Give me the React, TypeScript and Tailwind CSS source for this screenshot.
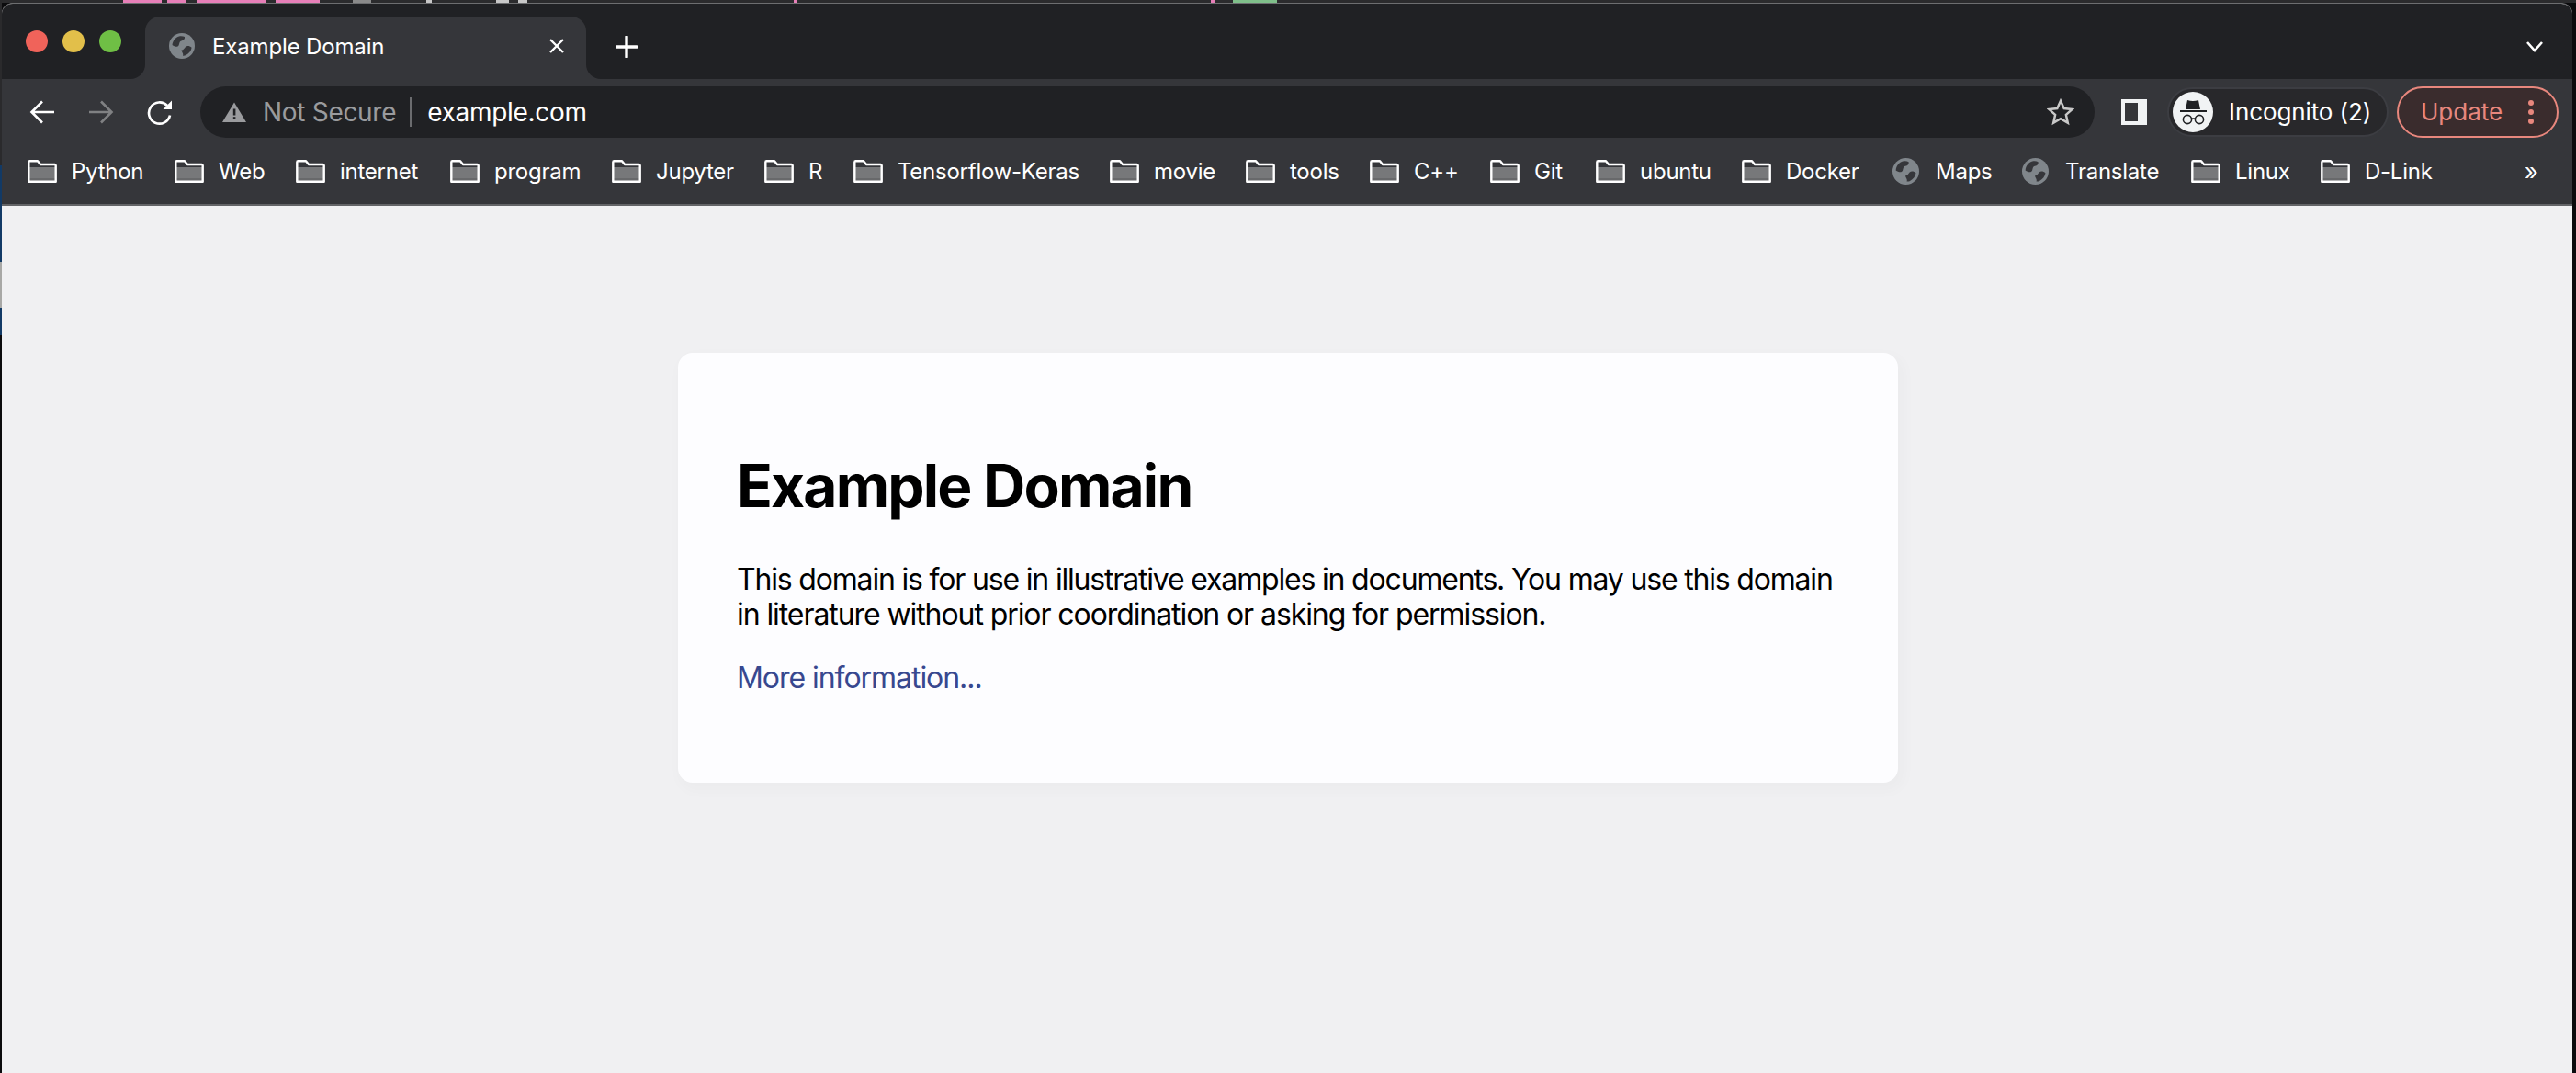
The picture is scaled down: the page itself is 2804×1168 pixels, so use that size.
import React from "react";

function Globe({ className }: { className: string }) {
  return (
    <svg viewBox="0 0 28 28" className={className}>
      <circle cx="14" cy="14" r="14" fill="#80868b" />
      <path d="M3.5 13 C4 8 7 4.5 11 3.4 C13.5 3 15.5 3.4 17 4 C17.5 6 16 8 13.5 8.5 C11 9 11.5 11.5 10.5 13.5 C9.5 15.5 6 15 3.5 13 Z" fill="#35363a" />
      <path d="M13.5 18.5 C15.5 19 16.5 16.5 18 15 C20 13.5 22.5 14 24.6 15.8 C24.2 19 22 22.5 18 24.3 C16.5 24.8 15.5 24.8 15 24.5 C16 22.5 14 21 13.5 18.5 Z" fill="#35363a" />
    </svg>
  );
}

function Folder() {
  return (
    <svg viewBox="0 0 32 25" className="w-[32px] h-[25px] shrink-0">
      <rect x="2" y="8" width="28" height="12" fill="#77787a" />
      <rect x="2" y="20" width="28" height="3" fill="#68696b" />
      <path d="M1.3 23.7 V2.5 Q1.3 1.3 2.5 1.3 H11 L14 5 H29.5 Q30.7 5 30.7 6.2 V23.7 Z" fill="none" stroke="#ffffff" strokeWidth="2.4" strokeLinejoin="round" />
    </svg>
  );
}

type Mark = { label: string; width: string; globe?: boolean };

const marks: Mark[] = [
  { label: "Python", width: "w-[160px]" },
  { label: "Web", width: "w-[132px]" },
  { label: "internet", width: "w-[168px]" },
  { label: "program", width: "w-[176px]" },
  { label: "Jupyter", width: "w-[166px]" },
  { label: "R", width: "w-[97px]" },
  { label: "Tensorflow-Keras", width: "w-[279px]" },
  { label: "movie", width: "w-[148px]" },
  { label: "tools", width: "w-[135px]" },
  { label: "C++", width: "w-[131px]" },
  { label: "Git", width: "w-[115px]" },
  { label: "ubuntu", width: "w-[159px]" },
  { label: "Docker", width: "w-[164px]" },
  { label: "Maps", width: "w-[141px]", globe: true },
  { label: "Translate", width: "w-[184px]", globe: true },
  { label: "Linux", width: "w-[141px]" },
  { label: "D-Link", width: "w-[150px]" },
];

export default function App() {
  return (
    <div className="w-[2804px] h-[1168px] overflow-hidden flex bg-[#0b0b0d] font-['Inter',sans-serif]">
      <div className="w-[2px] shrink-0 flex flex-col">
        <div className="h-[180px] bg-[#2a2a2c]" />
        <div className="h-[105px] bg-[#123a66]" />
        <div className="h-[50px] bg-[#a8a8a6]" />
        <div className="h-[30px] bg-[#123a66]" />
      </div>
      <div className="flex-1 flex flex-col min-w-0">
        <div className="h-[3px] shrink-0 flex items-start bg-[#2b2b2d]">
          <div className="ml-[132px] w-[42px] h-[3px] bg-[#e77fb8]" />
          <div className="ml-[6px] w-[20px] h-[3px] bg-[#e77fb8]" />
          <div className="ml-[12px] w-[76px] h-[3px] bg-[#e77fb8]" />
          <div className="ml-[10px] w-[48px] h-[3px] bg-[#e77fb8]" />
          <div className="ml-[36px] w-[20px] h-[3px] bg-[#8a8a8a]" />
          <div className="ml-[60px] w-[6px] h-[3px] bg-[#c8c8c8]" />
          <div className="ml-[70px] w-[14px] h-[3px] bg-[#c8c8c8]" />
          <div className="ml-[10px] w-[10px] h-[3px] bg-[#c8c8c8]" />
          <div className="ml-[290px] w-[4px] h-[3px] bg-[#e77fb8]" />
          <div className="ml-[450px] w-[4px] h-[3px] bg-[#e77fb8]" />
          <div className="ml-[20px] w-[48px] h-[3px] bg-[#7fbf8a]" />
        </div>
        <div className="flex-1 mr-[4px] flex flex-col rounded-t-[12px] overflow-hidden border-t border-[#6d6e70] bg-[#f0f0f2]">
          {/* Tab strip */}
          <div className="h-[82px] shrink-0 bg-[#202124] flex items-end relative">
            <div className="w-[156px] h-full flex items-start gap-[16px] pl-[26px] pt-[29px] shrink-0">
              <div className="w-[24px] h-[24px] rounded-full bg-[#f0635a]" />
              <div className="w-[24px] h-[24px] rounded-full bg-[#e2bf4a]" />
              <div className="w-[24px] h-[24px] rounded-full bg-[#6fbf45]" />
            </div>
            <div className="relative w-[480px] h-[68px] shrink-0 bg-[#35363a] rounded-t-[16px] flex items-center pl-[26px] pb-[4px] text-white">
              <div className="absolute left-[-16px] bottom-0 w-[16px] h-[16px] bg-[#35363a]">
                <div className="w-full h-full bg-[#202124] rounded-br-[16px]" />
              </div>
              <div className="absolute right-[-16px] bottom-0 w-[16px] h-[16px] bg-[#35363a]">
                <div className="w-full h-full bg-[#202124] rounded-bl-[16px]" />
              </div>
              <Globe className="w-[28px] h-[28px] shrink-0" />
              <span className="ml-[19px] pt-[2px] text-[24px] leading-[30px] tracking-[-0.15px] whitespace-nowrap">Example Domain</span>
              <svg viewBox="0 0 18 16" className="w-[18px] h-[16px] ml-auto mr-[23px]">
                <path d="M2 1 L16 15 M16 1 L2 15" stroke="#fff" strokeWidth="2.4" />
              </svg>
            </div>
            <div className="h-[68px] flex items-center ml-[32px] pb-[3px]">
              <svg viewBox="0 0 24 24" className="w-[24px] h-[24px]">
                <path d="M12 1 V23 M1 12 H23" stroke="#fff" strokeWidth="3.4" strokeLinecap="round" />
              </svg>
            </div>
            <div className="h-[68px] flex items-center ml-auto mr-[31px] pb-[3px]">
              <svg viewBox="0 0 20 13" className="w-[20px] h-[13px]">
                <path d="M2 2 L10 11 L18 2" stroke="#fff" strokeWidth="2.6" fill="none" />
              </svg>
            </div>
          </div>

          {/* Toolbar */}
          <div className="h-[72px] shrink-0 bg-[#35363a] flex items-center">
            <svg viewBox="0 0 28 28" className="w-[28px] h-[28px] ml-[30px] shrink-0">
              <path d="M27 14 H3 M14 2.5 L2.5 14 L14 25.5" stroke="#fff" strokeWidth="2.6" fill="none" />
            </svg>
            <svg viewBox="0 0 28 28" className="w-[28px] h-[28px] ml-[36px] shrink-0">
              <path d="M1 14 H25 M14 2.5 L25.5 14 L14 25.5" stroke="#808183" strokeWidth="2.6" fill="none" />
            </svg>
            <svg viewBox="0 0 30 30" className="w-[30px] h-[30px] ml-[35px] shrink-0">
              <path d="M23 8 A11.6 11.6 0 1 0 26 18.5" stroke="#fff" strokeWidth="2.7" fill="none" />
              <path d="M28 2.5 V12 H18.5 Z" fill="#fff" />
            </svg>
            <div className="ml-[29px] w-[2062px] h-[56px] shrink-0 rounded-full bg-[#202124] flex items-center pl-[24px] pr-[22px]">
              <svg viewBox="0 0 26 22" className="w-[26px] h-[22px] shrink-0">
                <path d="M13 0.5 L26 22 H0 Z" fill="#9a9b9e" />
                <rect x="11.8" y="7.5" width="2.6" height="7" fill="#202124" />
                <rect x="11.8" y="16.2" width="2.6" height="2.8" fill="#202124" />
              </svg>
              <span className="ml-[18px] text-[28px] leading-[34px] tracking-[-0.3px] text-[#9a9b9e] whitespace-nowrap">Not Secure</span>
              <div className="ml-[15px] w-[2px] h-[32px] bg-[#6b6c6f] shrink-0" />
              <span className="ml-[17px] text-[28px] leading-[34px] tracking-[-0.3px] text-white whitespace-nowrap">example.com</span>
              <svg viewBox="0 0 30 30" className="w-[30px] h-[30px] ml-auto shrink-0">
                <path d="M15 2.8 L18.7 11 L27.6 11.9 L20.9 17.9 L22.8 26.7 L15 22.2 L7.2 26.7 L9.1 17.9 L2.4 11.9 L11.3 11 Z" fill="none" stroke="#c8c8c8" strokeWidth="2.5" />
              </svg>
            </div>
            <div className="ml-[29px] w-[28px] h-[28px] shrink-0 bg-[#f1f3f4] pl-[4px] py-[4px] pr-[10px]">
              <div className="w-full h-full bg-[#35363a]" />
            </div>
            <div className="ml-[22px] w-[241px] h-[54px] shrink-0 rounded-full bg-[#28282b] border-2 border-[#3c3d42] flex items-center pl-[4px]">
              <svg viewBox="0 0 44 44" className="w-[44px] h-[44px] shrink-0">
                <circle cx="22" cy="22" r="22" fill="#f1f3f4" />
                <path d="M16 9 Q22 11 28 9 L30 19 H14 Z" fill="#202124" />
                <rect x="8" y="20" width="29" height="2" fill="#202124" />
                <circle cx="16" cy="30" r="4.6" fill="none" stroke="#202124" strokeWidth="1.6" />
                <circle cx="29" cy="30" r="4.6" fill="none" stroke="#202124" strokeWidth="1.6" />
                <path d="M20.5 29 H24.5" stroke="#202124" strokeWidth="1.6" />
              </svg>
              <span className="ml-[17px] text-[26px] leading-[32px] tracking-[-0.1px] text-white whitespace-nowrap">Incognito (2)</span>
            </div>
            <div className="ml-[9px] w-[176px] h-[56px] shrink-0 rounded-full bg-[#3a2c2d] border-2 border-[#e8877d] flex items-center pl-[24px]">
              <span className="text-[26px] leading-[32px] text-[#e8877d]">Update</span>
              <div className="ml-auto mr-[25px] flex flex-col gap-[4px]">
                <div className="w-[6px] h-[6px] rounded-full bg-[#e8877d]" />
                <div className="w-[6px] h-[6px] rounded-full bg-[#e8877d]" />
                <div className="w-[6px] h-[6px] rounded-full bg-[#e8877d]" />
              </div>
            </div>
          </div>

          {/* Bookmarks */}
          <div className="h-[66px] shrink-0 bg-[#35363a] border-b-2 border-[#636467] flex items-center pl-[28px] pb-[7px]">
            {marks.map((m) => (
              <div key={m.label} className={`${m.width} shrink-0 flex items-center gap-[16px] text-white text-[24px] leading-[30px] tracking-[-0.25px] whitespace-nowrap`}>
                {m.globe ? <Globe className="w-[29px] h-[29px] shrink-0 mr-[2px]" /> : <Folder />}
                <span>{m.label}</span>
              </div>
            ))}
            <span className="ml-auto mr-[37px] text-white text-[26px] leading-[30px]">»</span>
          </div>

          {/* Page */}
          <div className="flex-1 pt-[160px] pl-[736px]">
            <div className="w-[1328px] h-[468px] bg-[#fdfdff] rounded-[16px] shadow-[4px_6px_14px_4px_rgba(0,0,0,0.02)] px-[64px] pt-[106px]">
              <h1 className="text-[64px] leading-[77px] font-bold text-black tracking-[-1.8px] whitespace-nowrap">Example Domain</h1>
              <p className="mt-[45px] text-[32px] leading-[38.4px] text-black whitespace-nowrap">
                <span className="tracking-[-1.18px]">This domain is for use in illustrative examples in documents. You may use this domain</span>
                <br />
                <span className="tracking-[-1.08px]">in literature without prior coordination or asking for permission.</span>
              </p>
              <p className="mt-[30px] text-[32px] leading-[38.4px] tracking-[-1.05px] text-[#38488f]">More information...</p>
            </div>
          </div>
        </div>
      </div>
    </div>
  );
}
